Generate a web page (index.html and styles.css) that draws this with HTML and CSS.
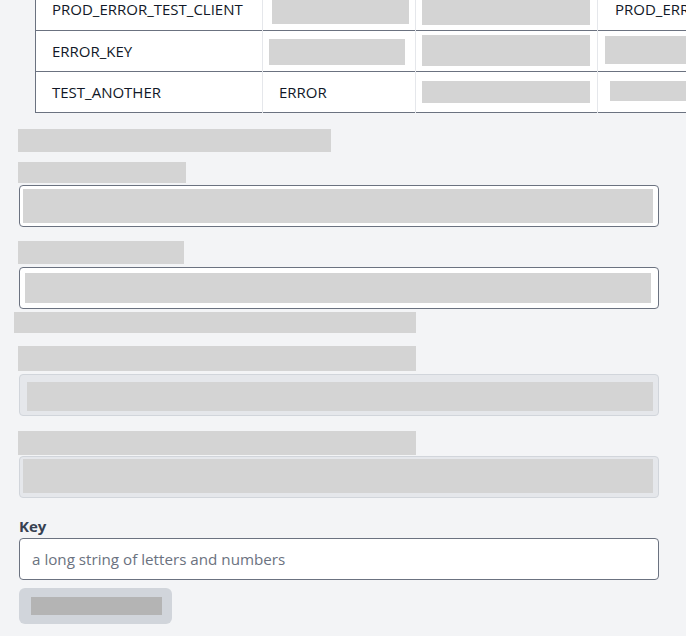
FILE: index.html
```html
<!DOCTYPE html>
<html>
<head>
<meta charset="utf-8">
<link rel="stylesheet" href="styles.css">
</head>
<body>
<div class="page">
  <div class="table-wrap">
    <table class="keys">
      <colgroup>
        <col class="c1"><col class="c2"><col class="c3"><col class="c4">
      </colgroup>
      <tbody>
        <tr class="r1">
          <td class="txt">PROD_ERROR_TEST_CLIENT</td>
          <td><div class="sk sk-r1c2"></div></td>
          <td><div class="sk sk-c3 sk-r1c3"></div></td>
          <td class="txt txt4">PROD_ERROR_TEST_CLIENT</td>
        </tr>
        <tr>
          <td class="txt">ERROR_KEY</td>
          <td><div class="sk sk-r2c2"></div></td>
          <td><div class="sk sk-c3 sk-r2c3"></div></td>
          <td><div class="sk sk-r2c4"></div></td>
        </tr>
        <tr>
          <td class="txt">TEST_ANOTHER</td>
          <td class="txt">ERROR</td>
          <td><div class="sk sk-c3 sk-r3c3"></div></td>
          <td><div class="sk sk-r3c4"></div></td>
        </tr>
      </tbody>
    </table>
  </div>

  <div class="form">
    <div class="sk bar bar-a"></div>
    <div class="sk bar bar-b"></div>
    <div class="field f1"><div class="sk fill"></div></div>
    <div class="sk bar bar-c"></div>
    <div class="field f2"><div class="sk fill"></div></div>
    <div class="sk bar bar-d"></div>
    <div class="sk bar bar-e"></div>
    <div class="field disabled f3"><div class="sk fill"></div></div>
    <div class="sk bar bar-f"></div>
    <div class="field disabled f4"><div class="sk fill"></div></div>
    <label class="label" for="key">Key</label>
    <input id="key" class="input" type="text" placeholder="a long string of letters and numbers">
    <button class="btn" type="button"><span class="btn-sk"></span></button>
  </div>
</div>
</body>
</html>
```

FILE: styles.css
```css
html, body {
  margin: 0;
  padding: 0;
  background: #f3f4f6;
  overflow: hidden;
}
body {
  font-family: "Open Sans", "Noto Sans", sans-serif;
  color: #111827;
}
.page {
  padding: 0 27px 0 18px;
}
.table-wrap {
  margin-left: 17px;
  margin-right: -27px;
  margin-top: -11px;
  overflow: hidden;
}
.keys {
  border-collapse: collapse;
  table-layout: fixed;
  width: 800px;
  background: #fff;
  border-left: 1px solid #6b7280;
}
.c1 { width: 227px; }
.c2 { width: 153px; }
.c3 { width: 182px; }
.c4 { width: 238px; }
.keys tr {
  height: 41px;
  border-bottom: 1px solid #6b7280;
}
.keys td {
  padding: 0;
  border-left: 1px solid #e5e7eb;
  font-size: 15px;
  color: #111827;
  white-space: nowrap;
  overflow: hidden;
  vertical-align: middle;
}
.keys td:first-child { border-left: none; }
.keys td.txt { padding-left: 16px; }
.keys td.txt4 { padding-left: 17px; }
.sk {
  background: #d4d4d4;
}
.sk-r1c2 { width: 137px; height: 25px; margin: 4px 0 0 9px; }
.sk-c3 { width: 168px; margin-left: 6px; }
.sk-r1c3 { height: 26px; margin-top: 6px; }
.sk-r2c2 { width: 136px; height: 26px; margin: 2px 0 0 6px; }
.sk-r2c3 { height: 31px; }
.sk-r2c4 { width: 200px; height: 28px; margin: -2px 0 0 7px; }
.sk-r3c3 { height: 22px; }
.sk-r3c4 { width: 200px; height: 20px; margin: -1px 0 0 12px; }

.form {
  display: flex;
  flex-direction: column;
  align-items: flex-start;
  padding-top: 16px;
}
.bar-a { width: 313px; height: 23px; }
.bar-b { width: 168px; height: 21px; margin-top: 10px; }
.bar-c { width: 166px; height: 23px; margin-top: 14px; }
.bar-d { width: 402px; height: 21px; margin-top: 3px; margin-left: -4px; }
.bar-e { width: 398px; height: 25px; margin-top: 13px; }
.bar-f { width: 398px; height: 24px; margin-top: 15px; }

.field {
  box-sizing: border-box;
  align-self: stretch;
  margin-left: 1px;
  height: 42px;
  border: 1px solid #6b7280;
  border-radius: 4px;
  background: #fff;
}
.field .fill { height: 100%; }
.f1 { margin-top: 2px; padding: 3px 5px 3px 3px; }
.f2 { margin-top: 3px; padding: 5px 7px 5px 5px; }
.field.disabled {
  background: #e5e7eb;
  border-color: #d1d5db;
}
.f3 { margin-top: 3px; padding: 7px 5px 4px 7px; }
.f4 { margin-top: 1px; padding: 2px 5px 4px 3px; }

.label {
  margin-top: 18px;
  margin-left: 1px;
  font-size: 15px;
  font-weight: 700;
  line-height: 21px;
  color: #374151;
}
.input {
  box-sizing: border-box;
  align-self: stretch;
  margin: 1px 0 0 1px;
  height: 42px;
  border: 1px solid #6b7280;
  border-radius: 4px;
  background: #fff;
  padding: 0 12px;
  font-family: "Open Sans", "Noto Sans", sans-serif;
  font-size: 15.2px;
  color: #111827;
}
.input::placeholder { color: #6b7280; opacity: 1; }
.btn {
  margin: 8px 0 0 1px;
  width: 153px;
  height: 36px;
  border: none;
  border-radius: 6px;
  background: #d1d5db;
  padding: 9px 0 0 12px;
  display: flex;
  align-items: flex-start;
}
.btn-sk {
  display: block;
  width: 131px;
  height: 18px;
  background: #b4b4b4;
}
```
